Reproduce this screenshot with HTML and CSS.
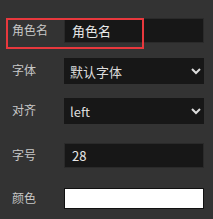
FILE: index.html
```html
<!DOCTYPE html>
<html lang="zh">
<head>
<meta charset="utf-8">
<link rel="stylesheet" href="styles.css">
</head>
<body>
<div class="panel">
  <div class="row row-a">
    <label class="label">角色名</label>
    <input class="field" type="text" value="角色名">
  </div>
  <div class="row row-b">
    <label class="label">字体</label>
    <select class="field sel"><option>默认字体</option></select>
  </div>
  <div class="row row-b">
    <label class="label">对齐</label>
    <select class="field sel"><option>left</option></select>
  </div>
  <div class="row row-c">
    <label class="label">字号</label>
    <input class="field" type="text" value="28">
  </div>
  <div class="row row-d">
    <label class="label">颜色</label>
    <input class="color" type="color" value="#ffffff">
  </div>
  <div class="highlight"></div>
</div>
</body>
</html>
```
FILE: styles.css
```css
html, body {
  margin: 0;
  padding: 0;
  background: #333333;
  font-family: "Noto Sans CJK SC", "Noto Sans", sans-serif;
  color-scheme: dark;
}
.panel {
  position: relative;
  padding: 18px 9px 0 12px;
  display: flex;
  flex-direction: column;
}
.row {
  display: flex;
  align-items: center;
}
.row-a { height: 25px; margin-bottom: 15px; }
.row-b { height: 26px; margin-bottom: 14px; }
.row-b + .row-b { margin-bottom: 19px; }
.row-c { height: 25px; margin-bottom: 20px; }
.row-d { height: 21px; }
.label {
  width: 52px;
  font-size: 12px;
  color: #c8c8c8;
  margin-top: -3px;
}
.field {
  box-sizing: border-box;
  width: 140px;
  height: 100%;
  margin: 0;
  background: #171717;
  border: 1px solid #2a2a2a;
  color: #e8e8e8;
  font-family: "Noto Sans CJK SC", "Noto Sans", sans-serif;
  font-size: 13px;
  padding: 0 7px;
  outline: none;
  border-radius: 0;
}
.sel {
  border: none;
  padding: 0 2px;
  color: #dcdcdc;
}
.color {
  box-sizing: border-box;
  -webkit-appearance: none;
  appearance: none;
  width: 140px;
  height: 100%;
  margin: 0;
  padding: 0;
  border: 1px solid #111111;
  background: #ffffff;
  border-radius: 0;
}
.color::-webkit-color-swatch-wrapper { padding: 0; }
.color::-webkit-color-swatch { border: none; }
.highlight {
  position: absolute;
  left: 6px;
  top: 18px;
  width: 138px;
  height: 31px;
  box-sizing: border-box;
  border: 2px solid #e8383d;
  pointer-events: none;
}
```
